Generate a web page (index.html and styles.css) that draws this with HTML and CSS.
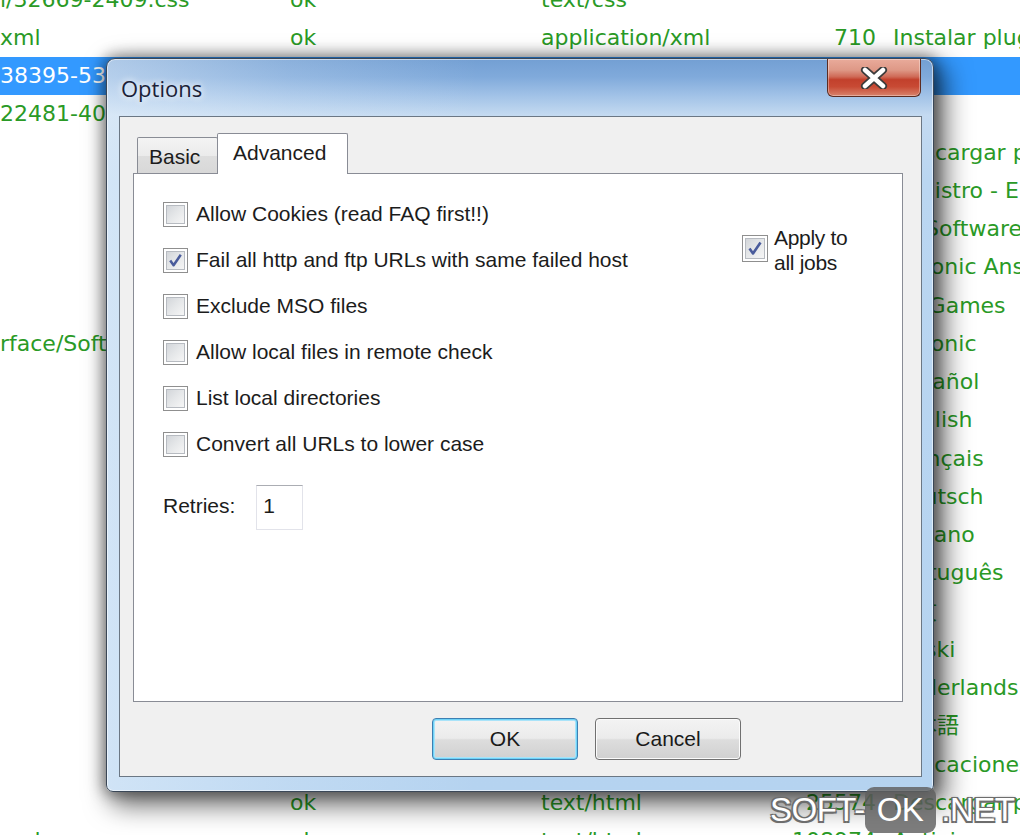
FILE: index.html
```html
<!DOCTYPE html>
<html lang="en">
<head>
<meta charset="utf-8">
<title>Options</title>
<link rel="stylesheet" href="styles.css">
</head>
<body>
<div class="list">
  <div class="row"><span class="c1">l/32669-2409.css</span><span class="c2">ok</span><span class="c3">text/css</span><span class="c4"></span><span class="c5"></span></div>
  <div class="row"><span class="c1">xml</span><span class="c2">ok</span><span class="c3">application/xml</span><span class="c4">710</span><span class="c5">Instalar plugins</span></div>
  <div class="row sel"><span class="c1">38395-5355.html</span><span class="c2">ok</span><span class="c3">text/html</span><span class="c4"></span><span class="c5"></span></div>
  <div class="row"><span class="c1">22481-4089.html</span><span class="c2">ok</span><span class="c3">text/html</span><span class="c4"></span><span class="c5"></span></div>
  <div class="row"><span class="c1"></span><span class="c2"></span><span class="c3"></span><span class="c4"></span><span class="c5">Descargar programas</span></div>
  <div class="row"><span class="c1"></span><span class="c2"></span><span class="c3"></span><span class="c4"></span><span class="c5">Registro - Entrar</span></div>
  <div class="row"><span class="c1"></span><span class="c2"></span><span class="c3"></span><span class="c4"></span><span class="c5">Mi Software</span></div>
  <div class="row"><span class="c1"></span><span class="c2"></span><span class="c3"></span><span class="c4"></span><span class="c5">Chronic Answers</span></div>
  <div class="row"><span class="c1"></span><span class="c2"></span><span class="c3"></span><span class="c4"></span><span class="c5">PC Games</span></div>
  <div class="row"><span class="c1">rface/Software</span><span class="c2"></span><span class="c3"></span><span class="c4"></span><span class="c5">Chronic</span></div>
  <div class="row"><span class="c1"></span><span class="c2"></span><span class="c3"></span><span class="c4"></span><span class="c5">Español</span></div>
  <div class="row"><span class="c1"></span><span class="c2"></span><span class="c3"></span><span class="c4"></span><span class="c5">English</span></div>
  <div class="row"><span class="c1"></span><span class="c2"></span><span class="c3"></span><span class="c4"></span><span class="c5">Français</span></div>
  <div class="row"><span class="c1"></span><span class="c2"></span><span class="c3"></span><span class="c4"></span><span class="c5">Deutsch</span></div>
  <div class="row"><span class="c1"></span><span class="c2"></span><span class="c3"></span><span class="c4"></span><span class="c5">Italiano</span></div>
  <div class="row"><span class="c1"></span><span class="c2"></span><span class="c3"></span><span class="c4"></span><span class="c5">Português</span></div>
  <div class="row"><span class="c1"></span><span class="c2"></span><span class="c3"></span><span class="c4"></span><span class="c5">中文</span></div>
  <div class="row"><span class="c1"></span><span class="c2"></span><span class="c3"></span><span class="c4"></span><span class="c5">Polski</span></div>
  <div class="row"><span class="c1"></span><span class="c2"></span><span class="c3"></span><span class="c4"></span><span class="c5">Nederlands</span></div>
  <div class="row"><span class="c1"></span><span class="c2"></span><span class="c3"></span><span class="c4"></span><span class="c5">日本語</span></div>
  <div class="row"><span class="c1"></span><span class="c2"></span><span class="c3"></span><span class="c4"></span><span class="c5">Aplicaciones</span></div>
  <div class="row"><span class="c1"></span><span class="c2">ok</span><span class="c3">text/html</span><span class="c4">25574</span><span class="c5">Descargar programas</span></div>
  <div class="row"><span class="c1">xml</span><span class="c2">ok</span><span class="c3">text/html</span><span class="c4">108974</span><span class="c5">Antivirus</span></div>
</div>

<div class="window">
  <div class="titlebar">
    <span class="title">Options</span>
    <div class="close">
      <svg width="28" height="22" viewBox="0 0 28 22">
        <path d="M5 3 L23 19 M23 3 L5 19" stroke="#3b3b3b" stroke-width="8" stroke-linecap="round" fill="none"/>
        <path d="M5 3 L23 19 M23 3 L5 19" stroke="#ffffff" stroke-width="4.5" stroke-linecap="round" fill="none"/>
      </svg>
    </div>
  </div>
  <div class="client">
    <div class="tabs">
      <div class="tab">Basic</div>
      <div class="tab active">Advanced</div>
    </div>
    <div class="panel">
      <div class="opts">
        <div class="opt"><span class="cb"></span><span>Allow Cookies (read FAQ first!!)</span></div>
        <div class="opt"><span class="cb checked"><svg viewBox="0 0 24 24"><path d="M6.5 12 L10 17 L17.5 6" /></svg></span><span>Fail all http and ftp URLs with same failed host</span></div>
        <div class="opt"><span class="cb"></span><span>Exclude MSO files</span></div>
        <div class="opt"><span class="cb"></span><span>Allow local files in remote check</span></div>
        <div class="opt"><span class="cb"></span><span>List local directories</span></div>
        <div class="opt"><span class="cb"></span><span>Convert all URLs to lower case</span></div>
        <div class="retries"><span>Retries:</span><span class="field">1</span></div>
      </div>
      <div class="apply">
        <span class="cb checked big"><svg viewBox="0 0 24 24"><path d="M6.5 12 L10 17 L17.5 6" /></svg></span>
        <span class="apply-text">Apply to<br>all jobs</span>
      </div>
    </div>
    <div class="buttons">
      <div class="btn default">OK</div>
      <div class="btn">Cancel</div>
    </div>
  </div>
</div>

<div class="watermark"><span class="wm-text">SOFT-</span><span class="wm-ok">OK</span><span class="wm-text">.NET</span></div>
</body>
</html>
```

FILE: styles.css
```css
html, body {
  margin: 0;
  padding: 0;
}
body {
  width: 1020px;
  height: 835px;
  overflow: hidden;
  position: relative;
  background: #ffffff;
}

/* background list */
.list {
  margin-top: -19.5px;
  font-family: "DejaVu Sans", "Noto Sans CJK JP", sans-serif;
  font-size: 22px;
  color: #2a9a26;
}
.row {
  display: grid;
  grid-template-columns: 290px 251px 249px 86px 1fr;
  height: 38.25px;
  line-height: 38.25px;
  white-space: nowrap;
}
.row > span {
  overflow: hidden;
}
.c4 { text-align: right; }
.c5 { padding-left: 17px; }
.row.sel {
  background: #3399ff;
  color: #ffffff;
}

/* window */
.window {
  position: absolute;
  left: 106px;
  top: 58px;
  width: 828px;
  height: 734px;
  box-sizing: border-box;
  border: 1px solid #3a4757;
  border-radius: 9px 9px 7px 7px;
  padding: 0 11px 14px 12px;
  display: flex;
  flex-direction: column;
  background:
    linear-gradient(90deg, rgba(235,244,252,0.5) 0%, rgba(235,244,252,0.2) 22%, rgba(235,244,252,0) 45%),
    linear-gradient(180deg, #739fd3 0px, #80aadb 18px, #a4c4e8 38px, #c4daf1 56px, #bad6f1 120px, #b5d3f0 100%);
  box-shadow: 8px 10px 26px 4px rgba(0,0,0,0.55), 0 0 14px 3px rgba(0,0,0,0.38), inset 0 0 0 1px rgba(255,255,255,0.55);
  z-index: 2;
}
.titlebar {
  height: 57px;
  display: flex;
  align-items: flex-start;
  flex-shrink: 0;
}
.title {
  margin-top: 13px;
  padding-left: 2px;
  font-family: "Open Sans", "Noto Sans", sans-serif;
  font-size: 22px;
  line-height: 32px;
  color: #1b1f38;
  text-shadow: 0 0 6px rgba(255,255,255,0.9), 0 0 10px rgba(255,255,255,0.7);
}
.close {
  margin-left: auto;
  margin-right: 1px;
  width: 94px;
  height: 38px;
  box-sizing: border-box;
  border: 1px solid #5b2c22;
  border-top: none;
  border-radius: 0 0 6px 6px;
  background: linear-gradient(180deg, #e9ab9b 0%, #de9886 30%, #cf6a57 48%, #c2402c 56%, #c84a34 75%, #d8836c 100%);
  box-shadow: inset 0 0 0 1px rgba(255,255,255,0.35);
  display: flex;
  align-items: center;
  justify-content: center;
}
.close svg {
  display: block;
  margin-top: 1px;
}

.client {
  flex: 1;
  border: 1px solid #6b7784;
  background: #f0f0f0;
  padding: 16px 18px 0 13px;
  display: flex;
  flex-direction: column;
  font-family: "Liberation Sans", Arial, sans-serif;
  font-size: 21px;
  color: #1c1c1c;
}
.tabs {
  height: 40px;
  display: flex;
  align-items: flex-end;
  padding-left: 4px;
  position: relative;
  z-index: 1;
}
.tab {
  width: 81px;
  height: 36px;
  box-sizing: border-box;
  border: 1px solid #898c95;
  border-bottom: none;
  border-radius: 2px 2px 0 0;
  padding: 0 0 0 11px;
  line-height: 38px;
  background: linear-gradient(180deg, #f4f4f4 0%, #ebebeb 50%, #dedede 51%, #d8d8d8 100%);
}
.tab.active {
  width: 131px;
  height: 41px;
  margin-bottom: -1px;
  margin-left: -1px;
  padding: 0 0 0 15px;
  line-height: 38px;
  background: #ffffff;
}
.panel {
  height: 529px;
  box-sizing: border-box;
  border: 1px solid #898c95;
  background: #ffffff;
  padding: 28px 0 0 29px;
  display: flex;
  align-items: flex-start;
}
.opts {
  flex: 1;
  display: flex;
  flex-direction: column;
  gap: 22px;
}
.opt {
  display: flex;
  align-items: center;
  height: 24px;
  gap: 8px;
  white-space: nowrap;
}
.cb {
  width: 25px;
  height: 25px;
  box-sizing: border-box;
  border: 1px solid #8f8f8f;
  background: #ffffff;
  padding: 2px;
  position: relative;
  flex-shrink: 0;
}
.cb::before {
  content: "";
  display: block;
  width: 100%;
  height: 100%;
  box-sizing: border-box;
  border: 1px solid #b7bbc1;
  background: linear-gradient(135deg, #d3d6da 0%, #e4e6e8 45%, #f6f6f6 100%);
}
.cb svg {
  position: absolute;
  left: 0;
  top: 0;
  width: 23px;
  height: 23px;
}
.cb svg path {
  fill: none;
  stroke: #4a5c9c;
  stroke-width: 2.6;
  stroke-linejoin: round;
}
.cb.big {
  width: 26px;
  height: 27px;
}
.cb.big svg {
  width: 24px;
  height: 25px;
}
.retries {
  margin-top: 7px;
  display: flex;
  align-items: center;
  gap: 21px;
}
.retries > span:first-child {
  margin-top: -4px;
}
.field {
  width: 47px;
  height: 45px;
  box-sizing: border-box;
  border: 1px solid #e2e3ea;
  border-top-color: #abadb3;
  background: #ffffff;
  padding: 6px 0 0 6px;
  line-height: 28px;
}
.apply {
  width: 130px;
  margin-right: 30px;
  margin-top: 23px;
  display: flex;
  align-items: flex-start;
  gap: 6px;
}
.apply .cb {
  margin-top: 10px;
}
.apply-text {
  line-height: 25px;
  letter-spacing: -0.3px;
}
.buttons {
  display: flex;
  gap: 17px;
  padding-left: 299px;
  margin-top: 16px;
}
.btn {
  width: 146px;
  height: 42px;
  box-sizing: border-box;
  border: 1px solid #707070;
  border-radius: 4px;
  background: linear-gradient(180deg, #f3f3f3 0%, #ebebeb 48%, #dddddd 52%, #d0d0d0 100%);
  box-shadow: inset 0 0 0 1px #fbfbfb;
  display: flex;
  align-items: center;
  justify-content: center;
  color: #1a1a1a;
}
.btn.default {
  border-color: #3d7fb2;
  box-shadow: inset 0 0 0 1px #6fd3f7, inset 0 0 0 2px #a9e3f9;
}

/* watermark */
.watermark {
  position: absolute;
  left: 770px;
  top: 787px;
  height: 46px;
  display: flex;
  align-items: center;
  font-family: "Liberation Sans", Arial, sans-serif;
  font-size: 33px;
  letter-spacing: -0.5px;
  color: #ffffff;
  z-index: 3;
}
.wm-text {
  text-shadow: -1.5px -1.5px 0 #6d6d6d, 1.5px -1.5px 0 #6d6d6d, -1.5px 1.5px 0 #6d6d6d, 1.5px 1.5px 0 #6d6d6d, 0 0 3px #555;
}
.wm-ok {
  height: 46px;
  line-height: 46px;
  padding: 0 13px 0 12px;
  margin: 0 5px 0 0;
  border-radius: 9px;
  background: rgba(95,95,95,0.82);
}
```
